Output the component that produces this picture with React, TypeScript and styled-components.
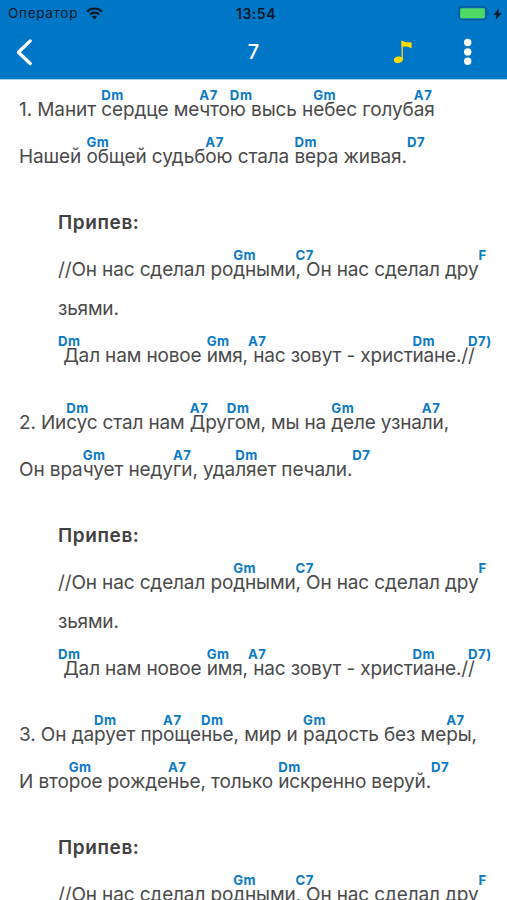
import React from "react";
import styled, { createGlobalStyle } from "styled-components";

const GlobalStyle = createGlobalStyle`
  * { box-sizing: border-box; }
  html, body { margin: 0; height: 100%; background: #fff; overflow: hidden; }
  body { font-family: Inter, "Noto Sans", sans-serif; }
`;

const Screen = styled.div`
  display: flex;
  flex-direction: column;
  width: 100%;
  height: 100vh;
  overflow: hidden;
  background: #fefefe;
`;

const Header = styled.header`
  flex: none;
  height: 80px;
  background: #0077c6;
  border-bottom: 1px solid #a5d4ef;
`;

const StatusBar = styled.div`
  display: grid;
  grid-template-columns: 1fr auto 1fr;
  align-items: center;
  height: 27px;
  padding: 0 5px 0 8px;
  color: #06192a;
  font-size: 13.5px;
  line-height: 27px;
`;

const Carrier = styled.div`
  display: flex;
  align-items: center;
  gap: 8px;
  letter-spacing: 0.7px;
`;

const Clock = styled.div`
  margin-left: 2px;
  font-weight: 600;
  font-size: 14px;
  letter-spacing: 0.5px;
`;

const Power = styled.div`
  display: flex;
  justify-content: flex-end;
  align-items: center;
  gap: 3px;
`;

const NavBar = styled.nav`
  display: grid;
  grid-template-columns: 1fr auto 1fr;
  align-items: center;
  height: 50px;
  padding: 0 35px 0 15px;
  color: #fff;
`;

const IconButton = styled.button`
  display: flex;
  padding: 0;
  border: 0;
  background: none;
  color: inherit;
`;

const Title = styled.h1`
  margin: 0 0 0 20px;
  font-size: 20px;
  line-height: 50px;
  font-weight: 500;
`;

const Actions = styled.div`
  display: flex;
  justify-content: flex-end;
  align-items: center;
  gap: 51px;
`;

const Song = styled.main`
  flex: 1;
  min-height: 0;
  overflow: hidden;
  padding: 2px 0 0 19px;
  color: #4a4a4a;
  font-size: 19px;
`;

const Verse = styled.section`
  margin-bottom: 27px;
`;

const Chorus = styled.section`
  margin: 0 0 19.6px 39px;
`;

const ChorusTitle = styled.h2`
  margin: 0;
  color: #404040;
  font-size: 19px;
  line-height: 39px;
  font-weight: 600;
  letter-spacing: 0.6px;
`;

const Line = styled.div<{ $plain?: boolean; $tracking: number }>`
  display: flex;
  padding-top: ${(p) => (p.$plain ? 0 : 8)}px;
  line-height: 39px;
  white-space: pre;
  letter-spacing: ${(p) => p.$tracking}px;
`;

const Segment = styled.span`
  position: relative;
`;

const Chord = styled.b`
  position: absolute;
  left: 0;
  top: -3px;
  color: #0b7ac6;
  font-size: 13.2px;
  line-height: 16px;
  font-weight: 700;
  letter-spacing: 0.55px;
`;

type Lyric = { text: string; tracking?: number };

const verses: Lyric[][] = [
  [
    { text: "1. Манит [Dm]сердце ме[A7]что[Dm]ю высь н[Gm]ебес голуб[A7]ая", tracking: -0.1 },
    { text: "Нашей [Gm]общей судьб[A7]ою стала [Dm]вера живая.[D7]", tracking: -0.11 },
  ],
  [
    { text: "2. Ии[Dm]сус стал нам [A7]Дру[Dm]гом, мы на [Gm]деле узна[A7]ли," },
    { text: "Он вра[Gm]чует неду[A7]ги, уда[Dm]ляет печали.[D7]", tracking: -0.11 },
  ],
  [
    { text: "3. Он да[Dm]рует пр[A7]още[Dm]нье, мир и [Gm]радость без ме[A7]ры,", tracking: -0.1 },
    { text: "И вто[Gm]рое рожде[A7]нье, только [Dm]искренно веруй.[D7]", tracking: -0.13 },
  ],
];

const chorus: Lyric[] = [
  { text: "//Он нас сделал ро[Gm]дными[C7], Он нас сделал дру[F]", tracking: -0.14 },
  { text: "зьями.", tracking: -0.2 },
  { text: "[Dm] Дал нам новое [Gm]имя,[A7] нас зовут - христ[Dm]иане./[D7)]/" },
];

function LyricLine({ lyric }: { lyric: Lyric }) {
  const parts = lyric.text.split(/\[([^\]]+)\]/);
  const segments = [{ chord: "", text: parts[0] }];
  for (let i = 1; i < parts.length; i += 2) {
    segments.push({ chord: parts[i], text: parts[i + 1] });
  }
  return (
    <Line $plain={parts.length === 1} $tracking={lyric.tracking ?? -0.15}>
      {segments.map((s, i) => (
        <Segment key={i}>
          {s.chord && <Chord>{s.chord}</Chord>}
          {s.text}
        </Segment>
      ))}
    </Line>
  );
}

const Wifi = () => (
  <svg width="17" height="13" viewBox="0 0 17 13" fill="none" stroke="#06192a" strokeWidth="2.1">
    <path d="M1 4.7C5.1 .5 11.9 .5 16 4.7" />
    <path d="M3.8 7.6c2.6-2.6 6.8-2.6 9.4 0" />
    <path d="M8.5 12.4 5.8 9.6c1.5-1.4 3.9-1.4 5.4 0z" fill="#06192a" stroke="none" />
  </svg>
);

const Battery = () => (
  <svg width="32" height="15" viewBox="0 0 32 15">
    <rect x=".9" y=".9" width="27.2" height="12.8" rx="3" fill="none" stroke="#075591" strokeWidth="1.3" />
    <rect x="2.2" y="2.3" width="24.7" height="10" rx="1.4" fill="#4cd964" />
    <path d="M29.5 5c1.6.6 1.6 4 0 4.6z" fill="#075591" />
  </svg>
);

const Bolt = () => (
  <svg width="9" height="12" viewBox="0 0 8 12" preserveAspectRatio="none" fill="#06192a">
    <path d="M5.6.2.2 7h3L2.3 11.8 7.8 5H4.6z" />
  </svg>
);

const Back = () => (
  <svg width="19" height="28" viewBox="0 0 19 28" fill="none" stroke="#fff" strokeWidth="3.3" strokeLinecap="round" strokeLinejoin="round">
    <path d="M15.2 2.9 3.4 14.2 15.2 25.5" />
  </svg>
);

const Note = () => (
  <svg width="20" height="24" viewBox="0 0 20 24">
    <path d="M9.2 1v19" stroke="#e6d02f" strokeWidth="1.4" />
    <path d="M8.5.4 10 .9c1.4 1.2 4.8 1.3 8.6 1.5V8c-2-.2-3-1-5-1.4-1.600-.3-3-.2-5.100-.1z" fill="#ffdc00" />
    <path d="M9.900 17v2.200c0 2.200-2.200 3.900-4.900 3.900-2.500 0-4.200-1.200-4.200-3.100 0-2.100 2.200-3.400 4.700-3.400 1.400 0 2.300.2 3 .7z" fill="#ffdc00" />
  </svg>
);

const Dots = () => (
  <svg width="8" height="28" viewBox="0 0 8 28" fill="#fff">
    <circle cx="3.7" cy="4.5" r="3.7" />
    <circle cx="3.7" cy="13.9" r="3.7" />
    <circle cx="3.7" cy="23.3" r="3.7" />
  </svg>
);

export default function App() {
  return (
    <Screen>
      <GlobalStyle />
      <Header>
        <StatusBar>
          <Carrier>Оператор <Wifi /></Carrier>
          <Clock>13:54</Clock>
          <Power><Battery /><Bolt /></Power>
        </StatusBar>
        <NavBar>
          <IconButton aria-label="Назад"><Back /></IconButton>
          <Title>7</Title>
          <Actions>
            <IconButton aria-label="Аккорды"><Note /></IconButton>
            <IconButton aria-label="Меню"><Dots /></IconButton>
          </Actions>
        </NavBar>
      </Header>
      <Song>
        {verses.map((verse, i) => (
          <React.Fragment key={i}>
            <Verse>{verse.map((l, j) => <LyricLine key={j} lyric={l} />)}</Verse>
            <Chorus>
              <ChorusTitle>Припев:</ChorusTitle>
              {chorus.map((l, j) => <LyricLine key={j} lyric={l} />)}
            </Chorus>
          </React.Fragment>
        ))}
      </Song>
    </Screen>
  );
}
